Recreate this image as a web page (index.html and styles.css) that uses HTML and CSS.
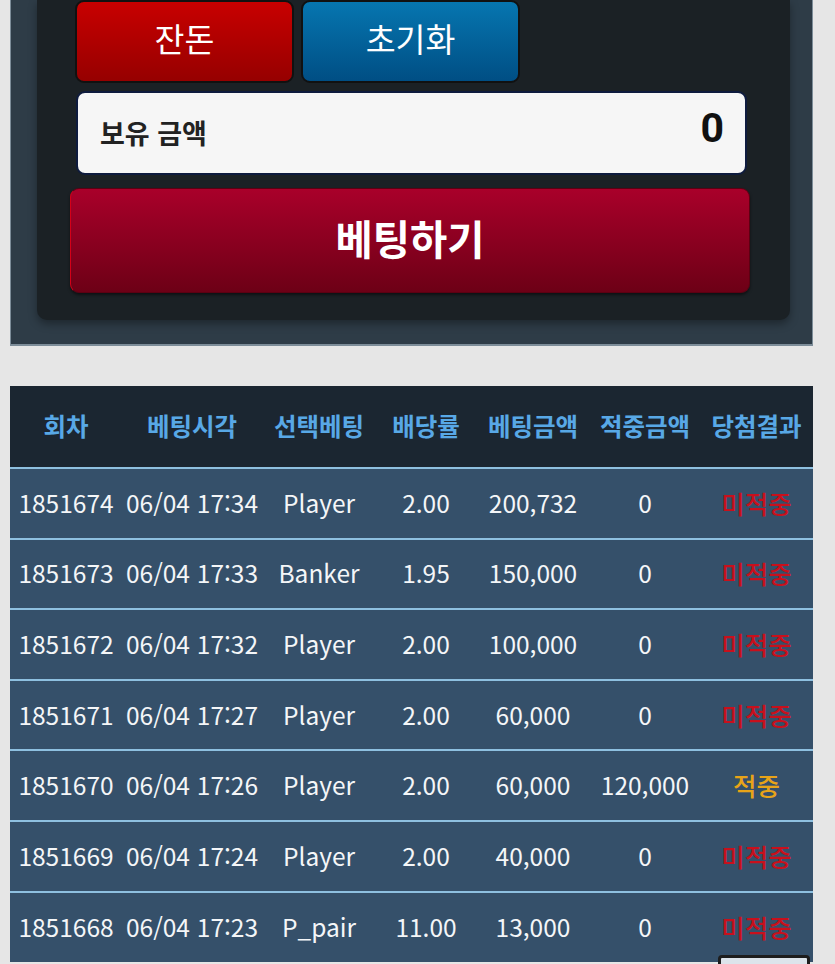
FILE: index.html
```html
<!DOCTYPE html>
<html lang="ko">
<head>
    <meta charset="utf-8">
    <meta name="viewport" content="width=device-width, initial-scale=1">
    <title>베팅 · 내역</title>
    <link rel="stylesheet" href="styles.css">
</head>
<body>
    <div class="bet-panel">
        <div class="bet-inner">
            <div class="quick-row">
                <button class="btn btn-red">잔돈</button>
                <button class="btn btn-blue">초기화</button>
            </div>
            <div class="balance">
                <span class="balance-label">보유 금액</span>
                <span class="balance-value">0</span>
            </div>
            <button class="bet-btn">베팅하기</button>
        </div>
    </div>

    <table class="history">
        <colgroup>
            <col class="c-round">
            <col class="c-time">
            <col class="c-pick">
            <col class="c-odds">
            <col class="c-amount">
            <col class="c-win">
            <col class="c-result">
        </colgroup>
        <thead>
            <tr>
                <th>회차</th>
                <th>베팅시각</th>
                <th>선택베팅</th>
                <th>배당률</th>
                <th>베팅금액</th>
                <th>적중금액</th>
                <th>당첨결과</th>
            </tr>
        </thead>
        <tbody>
            <tr><td>1851674</td><td>06/04 17:34</td><td>Player</td><td>2.00</td><td>200,732</td><td>0</td><td class="lose">미적중</td></tr>
            <tr><td>1851673</td><td>06/04 17:33</td><td>Banker</td><td>1.95</td><td>150,000</td><td>0</td><td class="lose">미적중</td></tr>
            <tr><td>1851672</td><td>06/04 17:32</td><td>Player</td><td>2.00</td><td>100,000</td><td>0</td><td class="lose">미적중</td></tr>
            <tr><td>1851671</td><td>06/04 17:27</td><td>Player</td><td>2.00</td><td>60,000</td><td>0</td><td class="lose">미적중</td></tr>
            <tr><td>1851670</td><td>06/04 17:26</td><td>Player</td><td>2.00</td><td>60,000</td><td>120,000</td><td class="win">적중</td></tr>
            <tr><td>1851669</td><td>06/04 17:24</td><td>Player</td><td>2.00</td><td>40,000</td><td>0</td><td class="lose">미적중</td></tr>
            <tr><td>1851668</td><td>06/04 17:23</td><td>P_pair</td><td>11.00</td><td>13,000</td><td>0</td><td class="lose">미적중</td></tr>
        </tbody>
    </table>

    <button class="to-top" aria-label="top"></button>
</body>
</html>
```

FILE: styles.css
```css
* {
    box-sizing: border-box;
    margin: 0;
    padding: 0;
}

body {
    background: #e6e6e6;
    font-family: "Noto Sans CJK KR", "Noto Sans", sans-serif;
    color: #fff;
    overflow: hidden;
}

/* top betting panel */
.bet-panel {
    width: 803px;
    margin-left: 10px;
    background: #2e3c47;
    border: 1px solid #7d8d99;
    border-top: none;
    border-bottom-width: 2px;
    padding: 0 22px 24px 26px;
}

.bet-inner {
    background: #1b2125;
    border-radius: 0 0 10px 10px;
    box-shadow: 0 4px 8px rgba(0, 0, 0, 0.35);
    padding: 0 38px 27px 38px;
}

.quick-row {
    display: flex;
    gap: 7px;
}

.btn {
    width: 219px;
    height: 83px;
    border-radius: 9px;
    border: 2px solid #111;
    color: #fff;
    font-family: "Noto Sans CJK KR", sans-serif;
    font-size: 32.5px;
    padding-bottom: 8px;
}

.btn-red {
    background: linear-gradient(#c80000, #960000);
}

.btn-blue {
    background: linear-gradient(#0676b0, #004e84);
}

.balance {
    margin-top: 8px;
    margin-left: 1px;
    width: 671px;
    height: 84px;
    background: #f6f6f6;
    border: 2px solid #0e1b3e;
    border-radius: 9px;
    display: flex;
    align-items: center;
    justify-content: space-between;
    padding: 0 21px 0 22px;
}

.balance-label {
    font-family: "Noto Sans CJK KR", sans-serif;
    font-weight: 700;
    font-size: 27px;
    color: #222;
    margin-top: -1px;
}

.balance-value {
    font-family: Roboto, sans-serif;
    font-weight: 700;
    font-size: 41px;
    color: #111;
    margin-top: -10px;
}

.bet-btn {
    display: block;
    margin-top: 13px;
    margin-left: -5px;
    width: 680px;
    height: 105px;
    border: 1px solid #5c0012;
    border-left-color: #d40018;
    border-radius: 9px;
    background: linear-gradient(#a9002a, #6d0016);
    box-shadow: 0 2px 3px rgba(0, 0, 0, 0.5);
    color: #fff;
    font-family: "Noto Sans CJK KR", sans-serif;
    font-weight: 700;
    font-size: 40.5px;
    padding-bottom: 6px;
}

/* history table */
.history {
    margin: 40px 0 0 10px;
    width: 803px;
    table-layout: fixed;
    border-collapse: collapse;
}

.c-round { width: 112px; }
.c-time { width: 140px; }
.c-pick { width: 114px; }
.c-odds { width: 100px; }
.c-amount { width: 114px; }
.c-win { width: 110px; }
.c-result { width: 113px; }

.history th {
    height: 82px;
    background: #1b2631;
    color: #58a8e6;
    font-family: "Noto Sans CJK KR", sans-serif;
    font-weight: 700;
    font-size: 24.5px;
    text-align: center;
    white-space: nowrap;
    padding-bottom: 2px;
}

.history td {
    height: 70.6px;
    background: #35506a;
    border-top: 2.5px solid #8ec0e0;
    text-align: center;
    white-space: nowrap;
    font-family: "Noto Sans CJK KR", sans-serif;
    font-size: 24.5px;
    color: #f4f6f8;
    padding-bottom: 2px;
}

.history td.lose {
    color: #c8101c;
    font-size: 25.5px;
    font-weight: 500;
}

.history td.win {
    color: #e8a418;
    font-size: 25.5px;
    font-weight: 500;
}

.to-top {
    position: fixed;
    left: 718px;
    top: 955px;
    width: 92px;
    height: 40px;
    border: 3px solid #1d1d1d;
    border-radius: 4px;
    background: #dce4eb;
}
```
